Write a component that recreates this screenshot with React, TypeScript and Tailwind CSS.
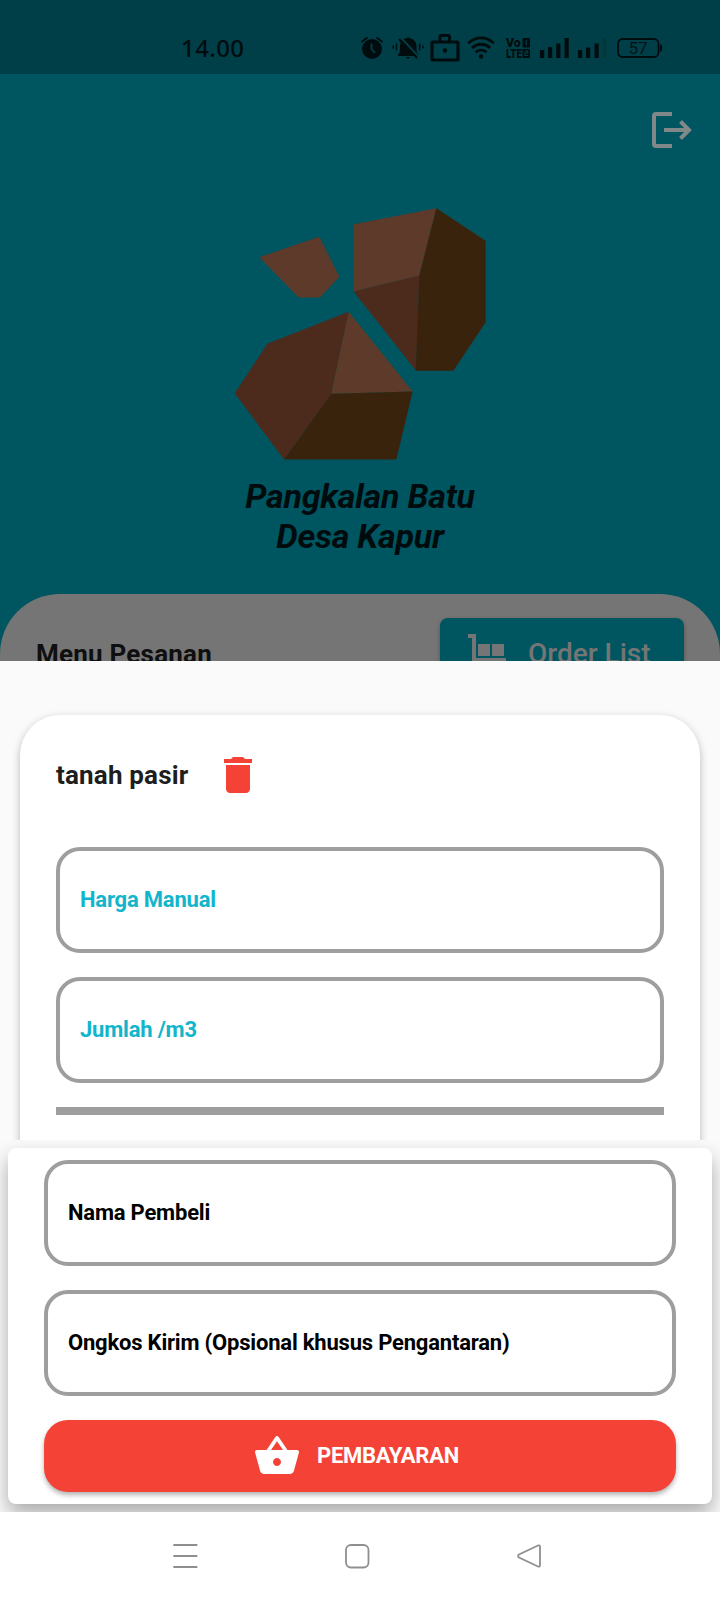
import React from "react";

function StatusIcons() {
  return (
    <svg width="310" height="44" viewBox="360 26 310 44" fill="#000c0e" stroke="none">
      {/* alarm */}
      <circle cx="372" cy="49" r="10" />
      <path d="M361.5 42l6-4.5M382.5 42l-6-4.5" stroke="#000c0e" strokeWidth="2" />
      <path d="M371.5 43.5v5.5l3.5 4" stroke="#003f46" strokeWidth="1.8" fill="none" />
      {/* muted bell */}
      <path d="M398 54.5c2-1.500 2-4 2-7.500 0-5 3-8 6-8.500 1-1.500 3.500-1.500 4.500 0 4 1 6 4 6 8.500 0 3.500 0 6 2 7.500v1.500h-20.500z" />
      <path d="M405.500 57h5l-2.500 2z" />
      <path d="M400.500 37.500l18 19" stroke="#003f46" strokeWidth="2" />
      <path d="M399 39l18 19" stroke="#000c0e" strokeWidth="2.200" />
      <path d="M396.500 43.500v7M393.200 45.500v3M419.700 43.500v7M423 45.500v3" stroke="#000c0e" strokeWidth="1.500" />
      {/* case */}
      <rect x="432" y="42" width="26" height="18" rx="1" fill="none" stroke="#000c0e" strokeWidth="3.200" />
      <path d="M440 41.500V37q0-1.500 1.500-1.500h6.500q1.500 0 1.500 1.500v4.500" fill="none" stroke="#000c0e" strokeWidth="3" />
      <circle cx="445" cy="50.500" r="2.200" />
      {/* wifi */}
      <g fill="none" stroke="#000c0e" strokeWidth="2.800">
        <path d="M468.300 43.200c7.500-7 18-7 25.500 0" />
        <path d="M472 48c5.500-5 12.700-5 18.200 0" />
        <path d="M475.700 52.300c3.300-3 7.500-3 10.800 0" />
      </g>
      <circle cx="481" cy="56.500" r="2.200" />
      {/* VoLTE */}
      <text x="506" y="47" fontFamily="Roboto, sans-serif" fontWeight="900" fontSize="12" textLength="14.500" lengthAdjust="spacingAndGlyphs">Vo</text>
      <text x="506" y="58" fontFamily="Roboto, sans-serif" fontWeight="900" fontSize="12" textLength="16" lengthAdjust="spacingAndGlyphs">LTE</text>
      <rect x="522.500" y="38" width="7.500" height="9.500" rx=".8" />
      <rect x="522.500" y="49" width="7.500" height="9" rx=".8" />
      <path d="M526.300 40v5.500M524.500 51h3.200v2h-2.700v2.500h3.200" stroke="#003f46" strokeWidth="1.200" fill="none" />
      {/* signals */}
      <path d="M540 50h4.200v8H540zM548 47h4.200v11H548zM556.200 43.500h4.200V58h-4.200zM564.500 38h4.200v20h-4.200z" />
      <path d="M578 50h4.200v8H578zM586 47.500h4.200V58H586zM594.500 43.500h4.200V58h-4.200z" />
      <path d="M602.500 38h4v20h-4z" fill="#00363d" />
      {/* battery */}
      <rect x="618" y="39" width="40.500" height="18" rx="4.500" fill="none" stroke="#000c0e" strokeWidth="1.800" />
      <path d="M660 44q2 .5 2 4t-2 4z" />
      <text x="638" y="54" textAnchor="middle" fontFamily="Roboto, sans-serif" fontSize="17" fill="#001518">57</text>
    </svg>
  );
}

function StoneLogo() {
  return (
    <svg width="260" height="260" viewBox="30 38.500 780 780">
      <path fill="#5d3a29" d="M118 201L298 140L358 260L300 322H236z" />
      <path fill="#5d3a29" d="M401 102L649 54L598 256L401 304z" />
      <path fill="#4d2b1c" d="M401 304L598 256L588 542z" />
      <path fill="#3a230c" d="M649 54L797 152V396L700 542H587L598 256z" />
      <path fill="#4d2b1c" d="M386 365L334 611L192 808L44 609L142 461z" />
      <path fill="#5d3a29" d="M386 365L578 604L334 611z" />
      <path fill="#3a230c" d="M334 611L578 604L529 808H192z" />
    </svg>
  );
}

function Field({ label, color }: { label: string; color: string }) {
  return (
    <div className="flex h-[106px] items-center rounded-[24px] border-4 border-[#9e9e9e] px-5">
      <span className={`text-[22px] leading-none font-bold tracking-[-0.2px] ${color}`}>{label}</span>
    </div>
  );
}

export default function App() {
  return (
    <div className="flex h-[1600px] w-[720px] flex-col overflow-hidden bg-white font-['Roboto',sans-serif]">
      <div className="flex h-[661px] shrink-0 flex-col overflow-hidden bg-[#005660]">
        <header className="flex h-[74px] shrink-0 items-start bg-[#003f47] pt-[26px] pl-[181px]">
          <span className="w-[179px] font-['Noto_Sans',sans-serif] text-[24px] leading-[44px] font-medium tracking-[0.4px] text-[#000c0e]">14.00</span>
          <StatusIcons />
        </header>
        <div className="flex h-[129px] shrink-0 justify-end pt-[34px] pr-[24px]">
          <svg width="48" height="48" viewBox="648 108 48 48" fill="none" stroke="#808889" strokeWidth="4">
            <path d="M672 114H656q-2 0-2 2v28q0 2 2 2h16" />
            <path d="M664 130h25M680.500 121.500l8.500 8.500-8.500 8.500" />
          </svg>
        </div>
        <div className="flex shrink-0 flex-col items-center">
          <StoneLogo />
          <h1 className="mt-[13px] h-[118px] text-center text-[34px] leading-[40px] font-bold tracking-[-0.23px] text-[#000b0d] italic">
            Pangkalan Batu
            <br />
            Desa Kapur
          </h1>
        </div>
        <div className="flex h-[120px] shrink-0 items-start justify-between rounded-t-[60px] bg-[#757575] pt-6 pr-9 pl-9">
          <span className="pt-[21px] text-[26px] leading-[30px] font-bold tracking-[0.22px] text-[#0f0f0f]">Menu Pesanan</span>
          <div className="flex h-[72px] w-[244px] items-center rounded-lg bg-[#005660] pl-[26px] shadow-[0_2px_4px_rgba(0,0,0,0.3)]">
            <svg width="40" height="44" viewBox="466 632 40 44" fill="#757575">
              <path d="M468 634h8v24h30v4h-34v-24h-4zM478 644h12v12h-12zM492 644h12v12h-12z" />
            </svg>
            <span className="pl-[22px] text-[28px] leading-none font-medium text-[#757575]">Order List</span>
          </div>
        </div>
      </div>

      <main className="flex h-[851px] shrink-0 flex-col bg-[#fafafa]">
        <div className="h-[479px] shrink-0 overflow-hidden px-5 pt-[54px]">
          <section className="flex h-[520px] flex-col rounded-[40px] bg-white px-9 pt-9 shadow-[0_3px_8px_rgba(0,0,0,0.26)]">
            <div className="flex h-12 items-center">
              <h2 className="w-[158px] text-[26px] leading-none font-bold tracking-[0.18px] text-[#1e1e1e]">tanah pasir</h2>
              <svg width="48" height="48" viewBox="0 0 24 24" fill="#f44336">
                <path d="M6 19c0 1.100.9 2 2 2h8c1.100 0 2-.9 2-2V7H6v12zM19 4h-3.500l-1-1h-5l-1 1H5v2h14V4z" />
              </svg>
            </div>
            <div className="mt-12 flex flex-col gap-6">
              <Field label="Harga Manual" color="text-[#12b5cb]" />
              <Field label="Jumlah /m3" color="text-[#12b5cb]" />
              <div className="h-2 bg-[#9e9e9e]" />
            </div>
          </section>
        </div>
        <div className="h-[372px] overflow-hidden bg-[#fafafa] px-2 pt-[8px] pb-2">
          <section className="flex h-[356px] flex-col gap-6 rounded-lg bg-white px-9 pt-3 shadow-[0_10px_20px_rgba(0,0,0,0.32)]">
            <Field label="Nama Pembeli" color="text-black" />
            <Field label="Ongkos Kirim (Opsional khusus Pengantaran)" color="text-black" />
            <button className="flex h-[72px] items-center rounded-[24px] bg-[#f44336] pl-[209px] text-[22px] leading-none font-bold tracking-[-0.27px] text-white shadow-[0_3px_5px_rgba(0,0,0,0.3)]">
              <svg width="48" height="48" viewBox="0 0 24 24" fill="currentColor">
                <path d="M17.210 9l-4.380-6.560c-.19-.28-.51-.42-.83-.42-.32 0-.64.14-.83.43L6.790 9H2c-.55 0-1 .45-1 1 0 .09.01.18.04.27l2.540 9.270c.23.84 1 1.460 1.920 1.460h13c.92 0 1.690-.62 1.930-1.460l2.540-9.270L23 10c0-.55-.45-1-1-1h-4.790zM9 9l3-4.400L15 9H9zm3 8c-1.100 0-2-.9-2-2s.9-2 2-2 2 .9 2 2-.9 2-2 2z" />
              </svg>
              <span className="pl-4">PEMBAYARAN</span>
            </button>
          </section>
        </div>
      </main>

      <nav className="flex h-[88px] shrink-0 items-center bg-white pl-[171px]">
        <svg width="28" height="28" viewBox="0 0 28 28" stroke="#8f8f8f" strokeWidth="2">
          <path d="M2.300 3h24M2.300 14h24M2.300 25h24" />
        </svg>
        <svg className="ml-[144px]" width="28" height="28" viewBox="0 0 28 28" fill="none" stroke="#8f8f8f" strokeWidth="1.800">
          <rect x="3" y="3" width="22.500" height="22.500" rx="5" />
        </svg>
        <svg className="ml-[144px]" width="28" height="28" viewBox="0 0 28 28" fill="none" stroke="#8f8f8f" strokeWidth="1.800">
          <path d="M23 3.500q2-.8 2 1.500v18q0 2.300-2 1.500L4 15.500q-2-1.500 0-3z" />
        </svg>
      </nav>
    </div>
  );
}
